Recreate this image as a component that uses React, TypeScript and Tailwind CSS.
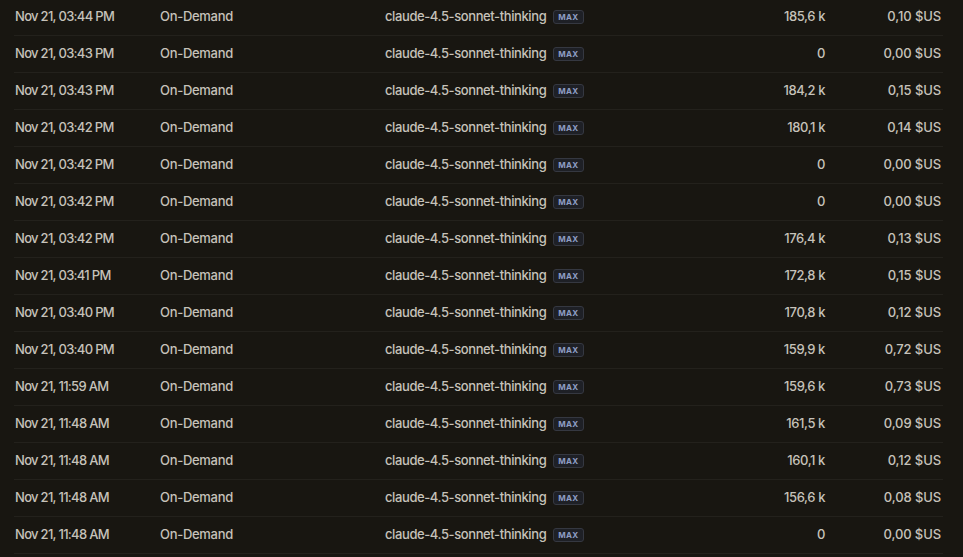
const rows = [
  ["Nov 21, 03:44 PM", "185,6 k", "0,10 $US"],
  ["Nov 21, 03:43 PM", "0", "0,00 $US"],
  ["Nov 21, 03:43 PM", "184,2 k", "0,15 $US"],
  ["Nov 21, 03:42 PM", "180,1 k", "0,14 $US"],
  ["Nov 21, 03:42 PM", "0", "0,00 $US"],
  ["Nov 21, 03:42 PM", "0", "0,00 $US"],
  ["Nov 21, 03:42 PM", "176,4 k", "0,13 $US"],
  ["Nov 21, 03:41 PM", "172,8 k", "0,15 $US"],
  ["Nov 21, 03:40 PM", "170,8 k", "0,12 $US"],
  ["Nov 21, 03:40 PM", "159,9 k", "0,72 $US"],
  ["Nov 21, 11:59 AM", "159,6 k", "0,73 $US"],
  ["Nov 21, 11:48 AM", "161,5 k", "0,09 $US"],
  ["Nov 21, 11:48 AM", "160,1 k", "0,12 $US"],
  ["Nov 21, 11:48 AM", "156,6 k", "0,08 $US"],
  ["Nov 21, 11:48 AM", "0", "0,00 $US"],
];

export default function App() {
  return (
    <div
      className="w-[963px] h-[557px] overflow-hidden bg-[#181611] text-[#c6c2ba] text-[13px] font-medium"
      style={{ fontFamily: "Inter, 'Liberation Sans', sans-serif" }}
    >
      <div className="-mt-px pl-[14px] pr-[20px]">
        {rows.map(([date, tokens, cost], i) => (
          <div
            key={i}
            className="flex items-center h-[37px] border-b border-[#23211c]"
          >
            <div className="w-[146px] pl-px tracking-[-0.7px]">{date}</div>
            <div className="w-[225px] tracking-[-0.3px]">On-Demand</div>
            <div className="flex items-center gap-[7px] w-[320px] tracking-[-0.4px]">
              <span>claude-4.5-sonnet-thinking</span>
              <span className="px-[4px] h-[14px] leading-[12px] rounded-[3px] border border-[#353841] bg-[#1e2026] text-[8px] font-bold text-[#8e9dc4] tracking-[0.3px]">
                MAX
              </span>
            </div>
            <div className="w-[120px] text-right tracking-[-0.4px]">{tokens}</div>
            <div className="flex-1 text-right pr-[2px] tracking-[-0.1px]">{cost}</div>
          </div>
        ))}
      </div>
    </div>
  );
}
